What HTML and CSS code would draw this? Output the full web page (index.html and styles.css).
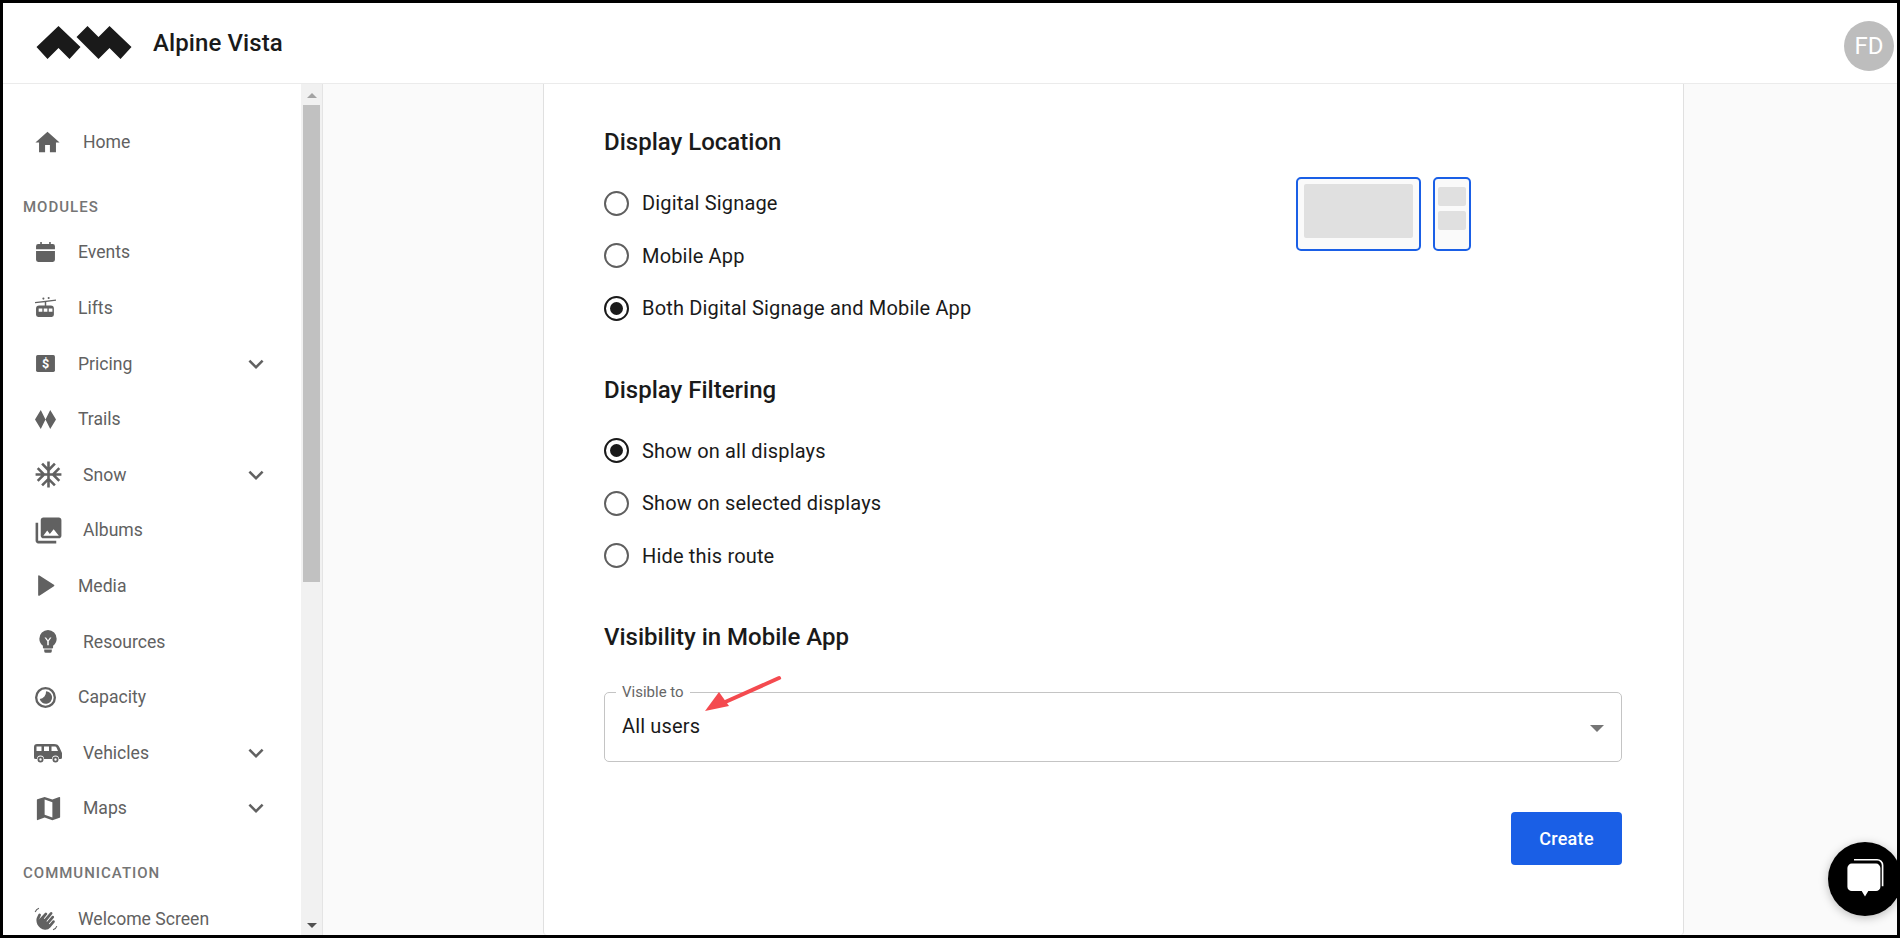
FILE: index.html
```html
<!DOCTYPE html>
<html lang="en">
<head>
<meta charset="utf-8">
<title>Alpine Vista</title>
<link rel="stylesheet" href="styles.css">
</head>
<body>
<div class="frame">
  <header class="topbar">
    <svg class="logo" viewBox="0 0 95 33"><path d="M0 21 22 0 44 21 33 33 22 22 11 33Z"/><path d="M40 11 51 0 62 11 73 0 95 21 84 33 73 22 62 33Z"/></svg>
    <div class="brand">Alpine Vista</div>
    <div class="avatar">FD</div>
  </header>
  <div class="body">
    <aside class="sidebar">
      <nav class="nav">
        <a class="item wide first"><svg class="ic" viewBox="0 0 24 24"><path d="M10 20v-6h4v6h5v-8h3L12 3 2 12h3v8z"/></svg><span>Home</span></a>
        <div class="section-label">MODULES</div>
        <a class="item"><svg class="ic s" viewBox="0 0 20 20"><path d="M1 4a2 2 0 0 1 2-2h2V0h1.500v2h7V0H15v2h2a2 2 0 0 1 2 2v3H1zM1 8.500h18V17a2 2 0 0 1-2 2H3a2 2 0 0 1-2-2z"/></svg><span>Events</span></a>
        <a class="item"><svg class="ic s" viewBox="0 0 20 20"><path d="M0 4.800 20 2.400v1.200L10.700 4.700V8H15a3 3 0 0 1 3 3v6a2 2 0 0 1-2 2H3a2 2 0 0 1-2-2v-6a3 3 0 0 1 3-3h5.300V4.900L0 6zM3.500 11v3h3.500v-3zm4.800 0v3h3.500v-3zm4.800 0v3h3.500v-3z" fill-rule="evenodd"/><circle cx="8" cy="1.500" r="1"/><circle cx="13" cy="1" r="1"/></svg><span>Lifts</span></a>
        <a class="item"><svg class="ic s" viewBox="0 0 20 20"><rect x="1" y="2" width="18" height="16" rx="1.500"/><text x="10" y="14.500" class="dollar">$</text></svg><span>Pricing</span><svg class="chev" viewBox="0 0 24 24"><path d="M16.590 8.590 12 13.170 7.410 8.590 6 10l6 6 6-6z"/></svg></a>
        <a class="item"><svg class="ic s" viewBox="0 0 20 20"><path d="M5.500 1 10 10 5.500 19 0 10zM14.500 1 20 10 14.500 19 10 10z"/></svg><span>Trails</span></a>
        <a class="item wide"><svg class="ic" viewBox="0 0 24 24"><path d="M22 11h-4.170l3.240-3.240-1.410-1.420L15 11h-2V9l4.660-4.660-1.420-1.410L13 6.170V2h-2v4.170L7.760 2.930 6.340 4.340 11 9v2H9L4.340 6.340 2.930 7.760 6.170 11H2v2h4.170l-3.240 3.240 1.410 1.420L9 13h2v2l-4.660 4.660 1.420 1.410L11 17.830V22h2v-4.170l3.240 3.240 1.420-1.410L13 15v-2h2l4.660 4.660 1.410-1.420L17.830 13H22z"/></svg><span>Snow</span><svg class="chev" viewBox="0 0 24 24"><path d="M16.590 8.590 12 13.170 7.410 8.590 6 10l6 6 6-6z"/></svg></a>
        <a class="item wide"><svg class="ic" viewBox="0 0 24 24"><path d="M22 16V4c0-1.100-.9-2-2-2H8c-1.100 0-2 .9-2 2v12c0 1.100.9 2 2 2h12c1.100 0 2-.9 2-2zm-11-4 2.030 2.710L16 11l4 5H8l3-4zM2 6v14c0 1.100.9 2 2 2h14v-2H4V6H2z"/></svg><span>Albums</span></a>
        <a class="item"><svg class="ic s" viewBox="0 0 20 20"><path d="M3 1a.8.8 0 0 1 1.200-.6L18 9.400a.8.8 0 0 1 0 1.300L4.200 19.700a.8.8 0 0 1-1.200-.7z"/></svg><span>Media</span></a>
        <a class="item wide"><svg class="ic bulb" viewBox="0 0 24 24"><path fill-rule="evenodd" d="M12 1a8 8 0 0 0-8 8c0 3 1.400 5 3.300 6.400V17a1 1 0 0 0 1 1h7.400a1 1 0 0 0 1-1v-1.600C18.600 14 20 12 20 9a8 8 0 0 0-8-8zM8.800 7.800h1.400L12 10.300l1.800-2.500h1.400L12.700 11.400V15h-1.400v-3.600z"/><path d="M8.500 19h7v1.600a1.500 1.500 0 0 1-1.500 1.400H10a1.500 1.500 0 0 1-1.500-1.400z"/></svg><span>Resources</span></a>
        <a class="item"><svg class="ic s" viewBox="0 0 20 20"><path fill-rule="evenodd" d="M10 0a10 10 0 1 0 0 20 10 10 0 0 0 0-20zm0 2.200a7.800 7.800 0 1 1 0 15.600 7.800 7.800 0 0 1 0-15.600z"/><path d="M10.500 4a6 6 0 1 1-6 7.500A7 7 0 0 0 10.500 4z"/></svg><span>Capacity</span></a>
        <a class="item wide"><svg class="ic truck" viewBox="0 0 28 20"><path fill-rule="evenodd" d="M3 1h17c3 0 4.500 1 5.500 3.500L28 10v4.500a1.500 1.500 0 0 1-1.500 1.500H25a3.500 3.500 0 0 0-7 0H10a3.500 3.500 0 0 0-7 0H1.500A1.500 1.500 0 0 1 0 14.500V4a3 3 0 0 1 3-3zM2.500 3.500V8h5V3.500zm7.500 0V8h5V3.500zm7.500 0V8h6.500l-1.500-3.500a2 2 0 0 0-1.500-1z"/><path fill-rule="evenodd" d="M6.500 13.500a3 3 0 1 0 0 6 3 3 0 0 0 0-6zm0 1.800a1.200 1.200 0 1 1 0 2.400 1.200 1.200 0 0 1 0-2.400zM21.500 13.500a3 3 0 1 0 0 6 3 3 0 0 0 0-6zm0 1.800a1.200 1.200 0 1 1 0 2.400 1.200 1.200 0 0 1 0-2.400z"/></svg><span>Vehicles</span><svg class="chev" viewBox="0 0 24 24"><path d="M16.590 8.590 12 13.170 7.410 8.590 6 10l6 6 6-6z"/></svg></a>
        <a class="item wide"><svg class="ic" viewBox="0 0 24 24"><path fill-rule="evenodd" d="M20.500 3l-.16.030L15 5.100 9 3 3.360 4.900c-.21.070-.36.250-.36.480V20.500c0 .28.220.5.5.5l.16-.03L9 18.900l6 2.100 5.640-1.900c.21-.07.360-.25.360-.48V3.500c0-.28-.22-.5-.5-.5zM15 19l-6-2.110V5l6 2.110V19z"/></svg><span>Maps</span><svg class="chev" viewBox="0 0 24 24"><path d="M16.590 8.590 12 13.170 7.410 8.590 6 10l6 6 6-6z"/></svg></a>
        <div class="section-label">COMMUNICATION</div>
        <a class="item"><svg class="ic s hand" viewBox="0 0 24 24"><path d="M5 13 11 6.500a1.200 1.200 0 0 1 1.800 1.600L10 11.500l.6.600 5.200-6.200a1.200 1.200 0 0 1 1.800 1.600L12.400 14l.6.500 4.500-5.200a1.200 1.200 0 0 1 1.800 1.500l-4.700 5.500.6.500 3-3.400a1.200 1.200 0 0 1 1.800 1.500L16 19.800a6.500 6.500 0 0 1-9.200.6C3.500 18 2.500 14 3.500 10.800L5 7.500a1.300 1.300 0 0 1 2.300 1.100L6 11.500z"/><path class="wave" d="M2 5.500Q3 3 5.500 2M22 18.500Q21.200 21 18.500 22"/></svg><span>Welcome Screen</span></a>
      </nav>
      <div class="scrollbar">
        <div class="arrow up"></div>
        <div class="thumb"></div>
        <div class="track"></div>
        <div class="arrow down"></div>
      </div>
    </aside>
    <main class="main">
      <div class="card">
        <section class="block">
          <h2>Display Location</h2>
          <div class="split">
            <div class="options">
              <label class="radio"><i></i>Digital Signage</label>
              <label class="radio"><i></i>Mobile App</label>
              <label class="radio on"><i></i>Both Digital Signage and Mobile App</label>
            </div>
            <div class="preview">
              <div class="screen desk"><b></b></div>
              <div class="screen phone"><b></b><b></b></div>
            </div>
          </div>
        </section>
        <section class="block">
          <h2>Display Filtering</h2>
          <div class="options">
            <label class="radio on"><i></i>Show on all displays</label>
            <label class="radio"><i></i>Show on selected displays</label>
            <label class="radio"><i></i>Hide this route</label>
          </div>
        </section>
        <section class="block last">
          <h2>Visibility in Mobile App</h2>
          <div class="select">
            <span class="float">Visible to</span>
            <span class="value">All users</span>
            <span class="caret"></span>
            <svg class="pointer" viewBox="0 0 80 40"><path d="M76 3 20 28" class="shaft"/><path d="M2 36 16 17 26 31Z" class="head"/></svg>
          </div>
          <div class="actions"><button class="create">Create</button></div>
        </section>
      </div>
    </main>
  </div>
  <div class="chat"><svg viewBox="0 0 40 40"><path class="back" d="M10 2.500h21a5 5 0 0 1 5 5v19"/><path d="M8 6h22a4 4 0 0 1 4 4v17a4 4 0 0 1-4 4h-7l-3 5-3-5H8a4 4 0 0 1-4-4V10a4 4 0 0 1 4-4z"/></svg></div>
</div>
</body>
</html>
```
FILE: styles.css
```css
* { box-sizing: border-box; }
html, body { margin: 0; height: 100%; overflow: hidden; }
body { font-family: Roboto, "Liberation Sans", sans-serif; color: #1a1a1a; background: #000; }
.frame { position: relative; width: 1900px; height: 938px; border: 3px solid #000; background: #fff; display: flex; flex-direction: column; overflow: hidden; }
.topbar { flex: none; height: 81px; border-bottom: 1px solid #ebebeb; display: flex; align-items: center; padding: 0 3px 0 33px; background: #fff; }
.logo { width: 96px; height: 33px; fill: #1a1a1a; margin-top: -1px; }
.brand { font-size: 24px; font-weight: 500; margin-left: 21px; letter-spacing: .1px; }
.avatar { margin-left: auto; width: 50px; height: 50px; border-radius: 50%; background: #bdbdbd; color: #fff; font-size: 24px; display: flex; align-items: center; justify-content: center; margin-top: 6px; }
.body { flex: 1; display: flex; min-height: 0; }
.sidebar { flex: none; width: 320px; display: flex; overflow: hidden; border-right: 1px solid #e4e4e4; background: #fff; }
.nav { flex: 1; min-width: 0; padding: 30px 0 0 20px; }
.item { height: 55.6px; display: flex; align-items: center; font-size: 17.6px; color: #616161; padding-left: 13px; padding-right: 30px; }
.item.first { height: 56px; }
.ic { width: 31px; height: 31px; fill: #616161; flex: none; margin-right: 19px; margin-left: -3px; }
.first .ic { width: 29px; height: 29px; margin-right: 21px; }
.ic.s { width: 21px; height: 21px; margin-right: 22px; margin-left: -1px; }
.ic.truck { width: 28px; height: 20px; margin-right: 21px; margin-left: -2px; }
.ic.bulb { width: 26px; height: 26px; margin-right: 22px; margin-left: -1px; }
.ic.hand { width: 26px; height: 26px; margin-right: 19px; margin-left: -3px; }
.wave { fill: none; stroke: #616161; stroke-width: 1; }
.dollar { font: 700 12px Roboto, sans-serif; fill: #fff; text-anchor: middle; }
.chev { width: 30px; height: 30px; fill: #616161; margin-left: auto; }
.section-label { font-size: 15px; letter-spacing: 1px; color: #757575; font-weight: 500; height: 22px; line-height: 22px; margin: 26px 0 6.6px 0; }
.scrollbar { flex: none; width: 21px; background: #f1f1f1; display: flex; flex-direction: column; align-items: center; padding: 9px 0 7px; }
.thumb { width: 17px; height: 477px; background: #c1c1c1; margin-top: 7px; flex: none; }
.track { flex: 1; }
.arrow { width: 0; height: 0; border-left: 5px solid transparent; border-right: 5px solid transparent; flex: none; }
.arrow.up { border-bottom: 5px solid #a3a3a3; }
.arrow.down { border-top: 5px solid #505050; }
.main { flex: 1; min-width: 0; background: #fafafa; padding-left: 220px; overflow: hidden; }
.card { width: 1141px; height: 100%; background: #fff; border: 1px solid #e0e0e0; border-width: 0 1px 0 1px; border-radius: 0 0 4px 4px; padding: 40px 61px 0 60px; }
.block { margin-bottom: 49px; }
.block h2 { margin: 0; font-size: 24px; font-weight: 500; line-height: 36px; color: #1a1a1a; }
.split { display: flex; }
.split .options { width: 692px; flex: none; }
.options { padding-top: 29px; display: flex; flex-direction: column; gap: 24px; }
.radio { display: flex; align-items: center; height: 28.5px; font-size: 20px; color: #1a1a1a; letter-spacing: .17px; }
.radio i { flex: none; width: 25px; height: 25px; border: 2.5px solid #5f5f5f; border-radius: 50%; margin-right: 13px; display: flex; align-items: center; justify-content: center; }
.radio.on i { border-color: #1a1a1a; }
.radio.on i::after { content: ""; width: 13px; height: 13px; border-radius: 50%; background: #1a1a1a; }
.preview { display: flex; gap: 12px; padding-top: 17px; }
.screen { height: 74px; border: 2px solid #1a5fe6; border-radius: 5px; background: #fafafa; display: flex; flex-direction: column; }
.screen b { display: block; background: #e0e0e0; border-radius: 2px; }
.desk { width: 125px; padding: 5px 6px; }
.desk b { height: 54px; }
.phone { width: 38px; padding: 8px 3px 0 3px; gap: 5px; }
.phone b { height: 19px; }
.select { position: relative; margin-top: 37px; height: 70px; border: 1px solid #c4c4c4; border-radius: 5px; padding: 15px 17px; font-size: 20px; color: #1a1a1a; letter-spacing: .15px; }
.float { position: absolute; left: 11px; top: -10px; padding: 0 6px; background: #fff; font-size: 15px; color: #666; line-height: 18px; letter-spacing: 0; }
.value { display: block; line-height: 24px; margin-top: 6px; }
.caret { position: absolute; right: 17px; top: 32px; border-left: 7px solid transparent; border-right: 7px solid transparent; border-top: 7px solid #757575; }
.pointer { position: absolute; left: 98px; top: -18px; width: 80px; height: 40px; }
.shaft { stroke: #f44a4f; stroke-width: 4; stroke-linecap: round; fill: none; }
.head { fill: #f44a4f; }
.actions { display: flex; justify-content: flex-end; margin-top: 50px; }
.create { width: 111px; height: 53px; border: 0; border-radius: 4px; background: #1a5fe6; color: #fff; font: 500 18px Roboto, sans-serif; letter-spacing: .3px; }
.chat { position: absolute; right: -5px; bottom: 19px; width: 74px; height: 74px; border-radius: 50%; background: #000; box-shadow: 0 2px 10px rgba(0,0,0,.25); display: flex; align-items: center; justify-content: center; }
.chat svg { width: 44px; height: 44px; fill: #fff; }
.chat .back { fill: none; stroke: #fff; stroke-width: 1.5; }
```
